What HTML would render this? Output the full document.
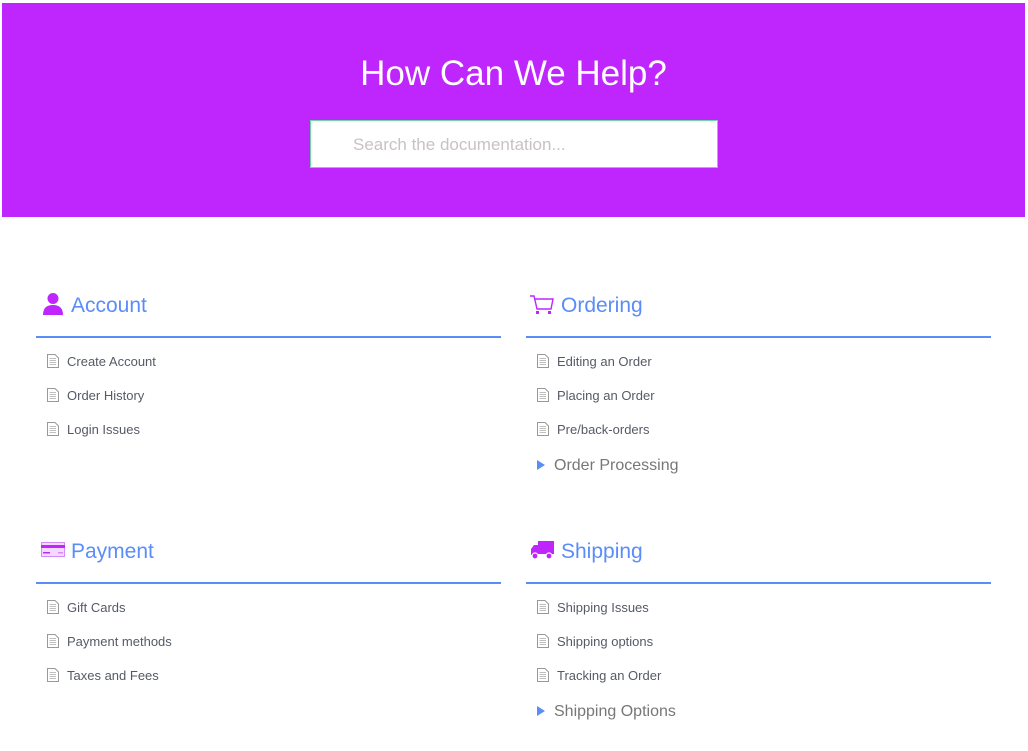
<!DOCTYPE html>
<html><head><meta charset="utf-8"><style>
*{margin:0;padding:0;box-sizing:border-box}
body{width:1028px;height:751px;background:#fff;font-family:"Liberation Sans","DejaVu Sans",sans-serif;position:relative;overflow:hidden}
.hero{position:absolute;left:2px;top:3px;width:1023px;height:214px;background:#bf26fe}
.hero h1{position:absolute;left:0;right:0;top:51px;text-align:center;color:#fff;font-weight:normal;font-size:35px}
.search{position:absolute;left:308px;top:117px;width:408px;height:48px;background:#fff;border:1px solid #6fd6a0}
.search span{position:absolute;left:42px;top:14px;font-size:17px;color:#c9c2c2}
.h{position:absolute;font-size:21px;color:#5a8df7}
.line{position:absolute;height:2px;background:#5a8df7;width:465px}
.it{position:absolute;font-size:13px;color:#555a66}
.doc{position:absolute}
.sub{position:absolute;font-size:16px;color:#777}
.tri{position:absolute;width:0;height:0;border-left:8px solid #5a8df7;border-top:5px solid transparent;border-bottom:5px solid transparent}
</style></head><body>
<div class="hero"><h1>How Can We Help?</h1><div class="search"><span>Search the documentation...</span></div></div>

<svg style="position:absolute;left:42px;top:292px" width="22" height="24" viewBox="0 0 22 24"><circle cx="11" cy="6.5" r="5.5" fill="#bf26fe"/><path d="M1 23 Q1 13 11 13 Q21 13 21 23Z" fill="#bf26fe"/></svg>
<div class="h" style="left:71px;top:294px">Account</div>
<div class="line" style="left:36px;top:336px"></div>

<svg style="position:absolute;left:529px;top:294px" width="26" height="22" viewBox="0 0 26 22"><path d="M1 2 H5 L8 15 H22 L24 5 H6" fill="none" stroke="#bf26fe" stroke-width="1.4"/><rect x="7" y="17" width="3" height="3" fill="#bf26fe"/><rect x="19" y="17" width="3" height="3" fill="#bf26fe"/></svg>
<div class="h" style="left:561px;top:294px">Ordering</div>
<div class="line" style="left:526px;top:336px"></div>

<svg style="position:absolute;left:41px;top:542px" width="24" height="16" viewBox="0 0 24 16"><rect x="0.5" y="0.5" width="23" height="14" fill="#f4d8ff" stroke="#d38bf7"/><rect x="0" y="3" width="24" height="3" fill="#bf26fe"/><rect x="2" y="10" width="7" height="1.5" fill="#bf26fe"/><rect x="17" y="10" width="5" height="1.5" fill="#d38bf7"/></svg>
<div class="h" style="left:71px;top:540px">Payment</div>
<div class="line" style="left:36px;top:582px"></div>

<svg style="position:absolute;left:530px;top:540px" width="25" height="20" viewBox="0 0 25 20"><rect x="8" y="1" width="16" height="13" fill="#bf26fe"/><path d="M1 9 L4 5 H8 V15 H1Z" fill="#bf26fe"/><circle cx="5" cy="16" r="3" fill="#bf26fe" stroke="#fff" stroke-width="1.2"/><circle cx="19" cy="16" r="3" fill="#bf26fe" stroke="#fff" stroke-width="1.2"/></svg>
<div class="h" style="left:561px;top:540px">Shipping</div>
<div class="line" style="left:526px;top:582px"></div>

<svg width="0" height="0" style="position:absolute"><defs><symbol id="d" viewBox="0 0 12 14"><path d="M0.5 0.5 H8 L11.5 4 V13.5 H0.5Z" fill="#fff" stroke="#999"/><path d="M2.5 4.5H9M2.5 6.5H9M2.5 8.5H9M2.5 10.5H9" stroke="#aaa" stroke-width="0.8"/></symbol></defs></svg>

<svg class="doc" style="left:47px;top:354px" width="12" height="14"><use href="#d"/></svg><div class="it" style="left:67px;top:354px">Create Account</div>
<svg class="doc" style="left:47px;top:388px" width="12" height="14"><use href="#d"/></svg><div class="it" style="left:67px;top:388px">Order History</div>
<svg class="doc" style="left:47px;top:422px" width="12" height="14"><use href="#d"/></svg><div class="it" style="left:67px;top:422px">Login Issues</div>

<svg class="doc" style="left:537px;top:354px" width="12" height="14"><use href="#d"/></svg><div class="it" style="left:557px;top:354px">Editing an Order</div>
<svg class="doc" style="left:537px;top:388px" width="12" height="14"><use href="#d"/></svg><div class="it" style="left:557px;top:388px">Placing an Order</div>
<svg class="doc" style="left:537px;top:422px" width="12" height="14"><use href="#d"/></svg><div class="it" style="left:557px;top:422px">Pre/back-orders</div>
<div class="tri" style="left:537px;top:460px"></div><div class="sub" style="left:554px;top:457px">Order Processing</div>

<svg class="doc" style="left:47px;top:600px" width="12" height="14"><use href="#d"/></svg><div class="it" style="left:67px;top:600px">Gift Cards</div>
<svg class="doc" style="left:47px;top:634px" width="12" height="14"><use href="#d"/></svg><div class="it" style="left:67px;top:634px">Payment methods</div>
<svg class="doc" style="left:47px;top:668px" width="12" height="14"><use href="#d"/></svg><div class="it" style="left:67px;top:668px">Taxes and Fees</div>

<svg class="doc" style="left:537px;top:600px" width="12" height="14"><use href="#d"/></svg><div class="it" style="left:557px;top:600px">Shipping Issues</div>
<svg class="doc" style="left:537px;top:634px" width="12" height="14"><use href="#d"/></svg><div class="it" style="left:557px;top:634px">Shipping options</div>
<svg class="doc" style="left:537px;top:668px" width="12" height="14"><use href="#d"/></svg><div class="it" style="left:557px;top:668px">Tracking an Order</div>
<div class="tri" style="left:537px;top:706px"></div><div class="sub" style="left:554px;top:703px">Shipping Options</div>
</body></html>
